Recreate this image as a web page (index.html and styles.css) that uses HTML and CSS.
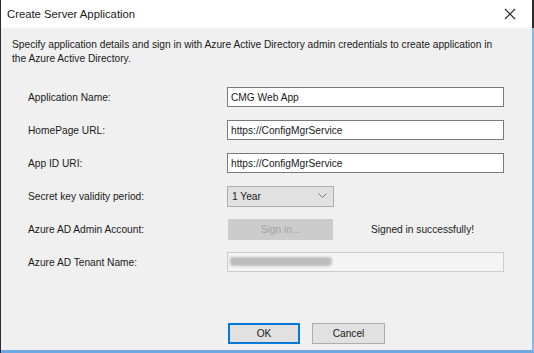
FILE: index.html
```html
<!DOCTYPE html>
<html lang="en">
<head>
    <meta charset="UTF-8">
    <title>Create Server Application</title>
    <link rel="stylesheet" href="styles.css">
</head>
<body>
    <div class="dialog">
        <div class="titlebar">
            <span class="title">Create Server Application</span>
            <svg class="close" width="12" height="12" viewBox="0 0 12 12">
                <path d="M1 1 L11 11 M11 1 L1 11" stroke="#222" stroke-width="1.1" fill="none"/>
            </svg>
        </div>
        <div class="content">
            <p class="desc">Specify application details and sign in with Azure Active Directory admin credentials to create application in the Azure Active Directory.</p>

            <div class="form">
                <label>Application Name:</label>
                <div class="field"><div class="textbox">CMG Web App</div></div>

                <label>HomePage URL:</label>
                <div class="field"><div class="textbox">https://ConfigMgrService</div></div>

                <label>App ID URI:</label>
                <div class="field"><div class="textbox">https://ConfigMgrService</div></div>

                <label>Secret key validity period:</label>
                <div class="field">
                    <div class="combo">
                        <span>1 Year</span>
                        <svg width="9" height="6" viewBox="0 0 9 6"><path d="M0.5 0.5 L4.5 4.5 L8.5 0.5" stroke="#777" fill="none"/></svg>
                    </div>
                </div>

                <label>Azure AD Admin Account:</label>
                <div class="field signin-row">
                    <div class="btn-disabled">Sign in...</div>
                    <span class="status">Signed in successfully!</span>
                </div>

                <label>Azure AD Tenant Name:</label>
                <div class="field"><div class="textbox disabled"><span class="smudge"></span></div></div>
            </div>

            <div class="buttons">
                <div class="btn default">OK</div>
                <div class="btn">Cancel</div>
            </div>
        </div>
    </div>
</body>
</html>
```

FILE: styles.css
```css
body {
    margin: 0;
    font-family: 'Liberation Sans', Arial, sans-serif;
    color: #1a1a1a;
    background: #f0f0f0;
}
.dialog {
    width: 534px;
    height: 353px;
    box-sizing: border-box;
    border-left: 1px solid #2b2b2b;
    display: flex;
    flex-direction: column;
}
.titlebar {
    height: 28px;
    background: #fff;
    display: flex;
    align-items: center;
    justify-content: space-between;
    padding: 0 16px 0 6px;
    border-right: 2px solid #2b2b2b;
    flex-shrink: 0;
}
.title {
    font-size: 11.3px;
    color: #1a1a1a;
}
.close {
    display: block;
}
.content {
    flex: 1;
    background: #f0f0f0;
    border-right: 2px solid #86b8e8;
    border-bottom: 3px solid #6fa8e2;
    display: flex;
    flex-direction: column;
}
.desc {
    margin: 0;
    padding: 10px 28px 0 11px;
    font-size: 10.2px;
    line-height: 14px;
}
.form {
    display: grid;
    grid-template-columns: 199px 277px;
    grid-auto-rows: 20px;
    row-gap: 13px;
    padding-left: 27px;
    margin-top: 21px;
    font-size: 10.2px;
}
.form label {
    display: flex;
    align-items: center;
}
.field {
    display: flex;
    align-items: center;
}
.textbox {
    width: 100%;
    height: 20px;
    box-sizing: border-box;
    border: 1px solid #7a7a7a;
    background: #fff;
    padding-left: 3px;
    display: flex;
    align-items: center;
}
.textbox.disabled {
    border-color: #cccccc;
    background: #f4f4f4;
    position: relative;
}
.smudge {
    position: absolute;
    left: 2px;
    top: 4px;
    width: 102px;
    height: 9px;
    background: #bdbdbd;
    border-radius: 2px 4px 4px 3px;
    filter: blur(0.8px);
}
.combo {
    width: 107px;
    height: 21px;
    box-sizing: border-box;
    border: 1px solid #adadad;
    background: #e1e1e1;
    display: flex;
    align-items: center;
    justify-content: space-between;
    padding: 0 6px 0 4px;
}
.signin-row {
    gap: 38px;
}
.btn-disabled {
    width: 105px;
    height: 21px;
    margin-left: 1px;
    background: #cccccc;
    color: #a3a3a3;
    display: flex;
    align-items: center;
    justify-content: center;
}
.buttons {
    margin-top: auto;
    margin-bottom: 6px;
    display: flex;
    gap: 12px;
    padding-left: 227px;
    font-size: 10.2px;
}
.btn {
    width: 73px;
    height: 21px;
    box-sizing: border-box;
    border: 1px solid #adadad;
    background: #e1e1e1;
    display: flex;
    align-items: center;
    justify-content: center;
}
.btn.default {
    width: 72px;
    border: 2px solid #0078d7;
}
```
